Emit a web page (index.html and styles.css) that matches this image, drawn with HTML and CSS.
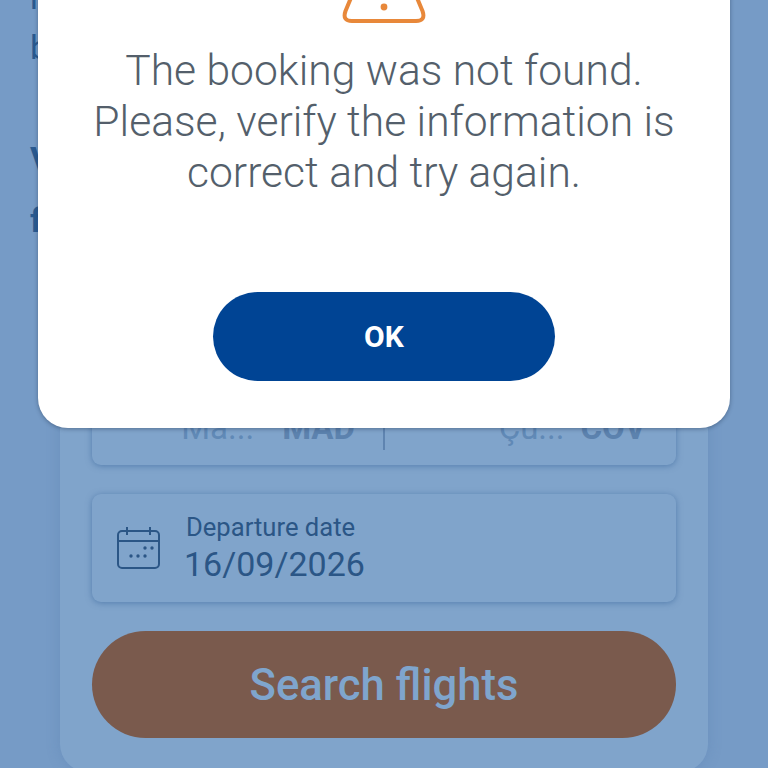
FILE: index.html
```html
<!DOCTYPE html>
<html lang="en">
<head>
<meta charset="utf-8">
<title>Booking not found</title>
<link rel="stylesheet" href="styles.css">
</head>
<body>
<div class="screen">
  <div class="intro">
    <p class="intro-line intro-r">r</p>
    <p class="intro-line intro-b">b</p>
    <p class="intro-line intro-v">V</p>
    <p class="intro-line intro-f">f</p>
  </div>
  <main class="card">
    <div class="field route">
      <div class="airport from"><span class="city">Ma...</span><span class="code">MAD</span></div>
      <div class="divider"></div>
      <div class="airport to"><span class="city">Çu...</span><span class="code">COV</span></div>
    </div>
    <div class="field date">
      <svg class="calendar" viewBox="0 0 44 44" width="44" height="44" fill="none" stroke="currentColor" stroke-width="2" aria-hidden="true">
        <rect x="1" y="4" width="41" height="37" rx="4"/>
        <path d="M1 14H42M10 0V8M33 0V8"/>
        <g fill="currentColor" stroke="none">
          <circle cx="14" cy="29" r="1.7"/><circle cx="21" cy="29" r="1.7"/><circle cx="28" cy="29" r="1.7"/>
          <circle cx="28" cy="21" r="1.7"/><circle cx="35" cy="21" r="1.7"/>
        </g>
      </svg>
      <div class="date-text">
        <span class="date-label">Departure date</span>
        <span class="date-value">16/09/2026</span>
      </div>
    </div>
    <button class="search" type="button">Search flights</button>
  </main>
  <section class="dialog" role="alertdialog">
    <svg class="warn" viewBox="0 0 84 96" width="86" height="96" fill="none" stroke="#e8883a" stroke-width="4" aria-hidden="true">
      <path d="M36 6 L3.5 84 Q0 94 10 94 H74 Q84 94 80.5 84 L48 6 Q42 -4 36 6Z" stroke-linejoin="round"/>
      <circle cx="42" cy="80" r="3.4" fill="#e8883a" stroke="none"/>
    </svg>
    <p class="message">The booking was not found.<br>Please, verify the information is<br>correct and try again.</p>
    <button class="ok" type="button">OK</button>
  </section>
</div>
</body>
</html>
```
FILE: styles.css
```css
* { box-sizing: border-box; }
html, body { margin: 0; padding: 0; }
body { font-family: Roboto, "Liberation Sans", sans-serif; }
.screen {
  position: relative;
  width: 768px;
  height: 768px;
  overflow: hidden;
  background: #769bc6;
  display: flex;
  flex-direction: column;
}
.intro { height: 260px; padding-left: 30px; color: #2a5a90; flex: none; }
.intro-line { margin: 0; font-size: 34px; line-height: 50px; font-weight: 400; }
.intro-r { margin-top: -28px; }
.intro-b { margin-bottom: 62px; }
.intro-v, .intro-f { font-weight: 700; }
.intro-v { margin-bottom: 11px; }
.card {
  flex: none;
  width: 648px;
  height: 512px;
  margin-left: 60px;
  padding: 0 32px 34px;
  border-radius: 28px;
  background: #80a4cb;
  box-shadow: 0 0 14px rgba(70, 110, 165, .25);
  display: flex;
  flex-direction: column;
  justify-content: flex-end;
}
.field {
  background: #80a4cb;
  border-radius: 9px;
  box-shadow: 0 1px 6px rgba(50, 95, 150, .55);
}
.route {
  height: 108px;
  margin-bottom: 29px;
  display: flex;
  align-items: flex-end;
  padding: 0 30px 18px;
}
.airport {
  flex: 1 1 0;
  display: flex;
  align-items: baseline;
  justify-content: flex-end;
  gap: 28px;
  padding-left: 28px;
  font-size: 33px;
  color: #6089b6;
}
.airport.to { gap: 16px; }
.from { padding-right: 28px; padding-left: 0; }
.code { font-weight: 700; color: #5c82ae; }
.divider { width: 2px; height: 60px; margin-bottom: -3px; background: #5f84b0; }
.date { height: 108px; display: flex; align-items: center; gap: 23px; padding-left: 25px; color: #2b5686; }
.calendar { flex: none; margin-top: 2px; }
.date-text { display: flex; flex-direction: column; }
.date-label { font-size: 25.6px; line-height: 32px; padding-left: 2px; }
.date-value { font-size: 34px; line-height: 42px; }
.search {
  width: 584px;
  height: 107px;
  margin-top: 29px;
  padding-top: 2px;
  border: 0;
  border-radius: 54px;
  background: #7a5a4d;
  color: #7fa5cd;
  font: 500 43.6px Roboto, sans-serif;
}
.dialog {
  position: absolute;
  left: 38px;
  top: -72px;
  width: 692px;
  height: 500px;
  background: #fff;
  border-radius: 30px;
  box-shadow: 0 1px 4px rgba(30, 50, 80, .45);
  display: flex;
  flex-direction: column;
  align-items: center;
}
.warn { flex: none; margin-top: -1px; }
.message {
  margin: 22px 0 0;
  font-size: 42.6px;
  line-height: 51px;
  font-weight: 300;
  color: #545f6b;
  text-align: center;
}
.ok {
  width: 342px;
  height: 89px;
  margin-top: 94px;
  border: 0;
  border-radius: 45px;
  background: #004494;
  color: #fff;
  font: 700 30px Roboto, sans-serif;
}
```
